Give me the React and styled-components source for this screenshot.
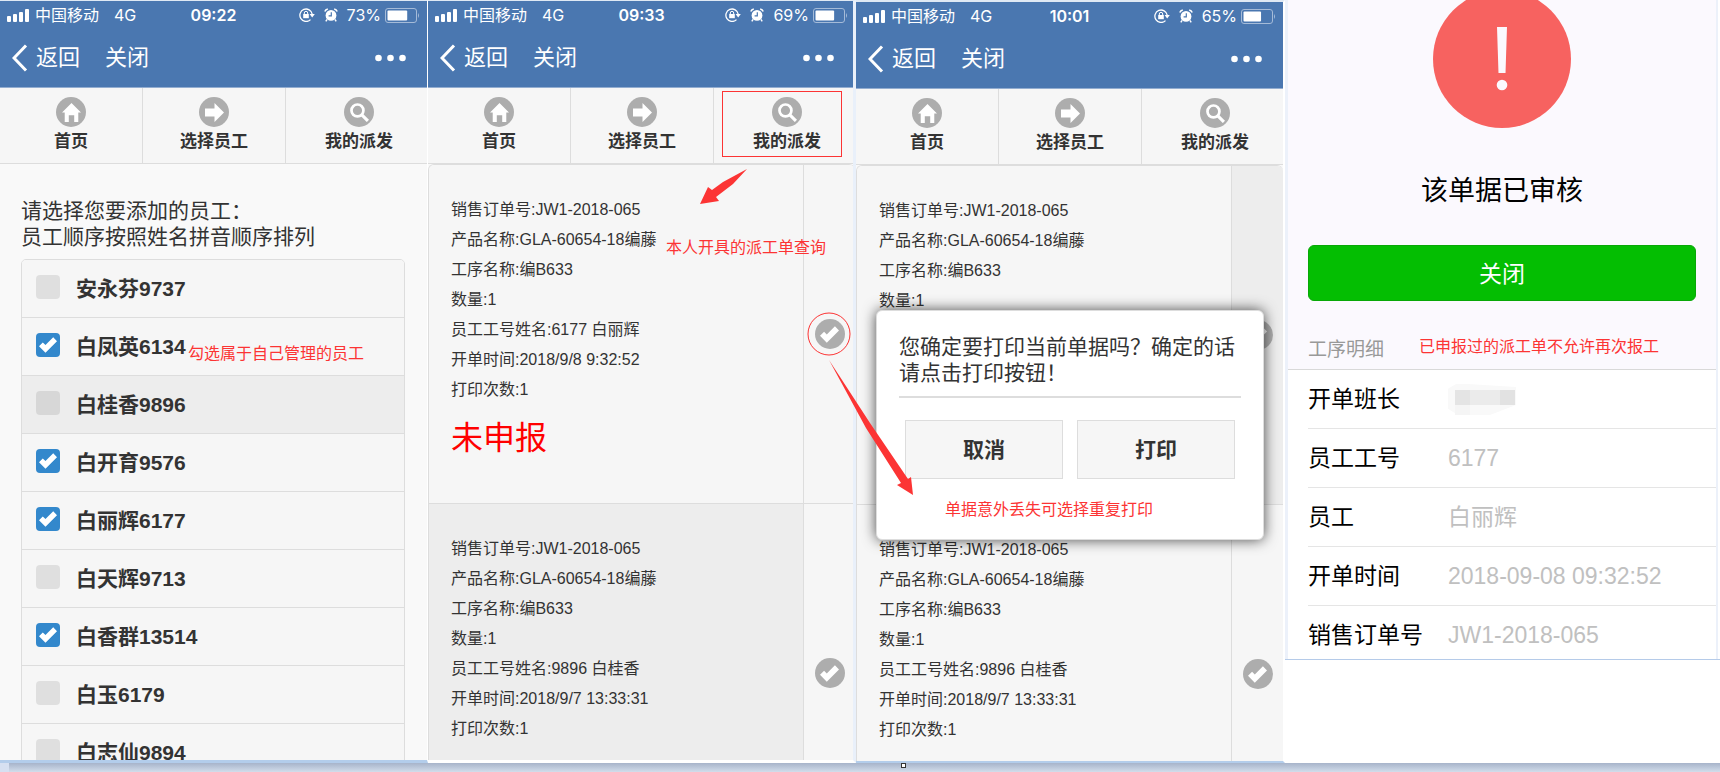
import React, { useState } from "react";
import styled, { createGlobalStyle } from "styled-components";

const GlobalStyle = createGlobalStyle`
  *, *::before, *::after {
    box-sizing: border-box;
  }

  body {
    margin: 0;
    background: #fff;
    color: #333;
    font-family: "Liberation Sans", "Noto Sans CJK SC", sans-serif;
    font-size: 16px;
  }

  h1, h2, p, ul, dl, dd {
    margin: 0;
    padding: 0;
    font-weight: 400;
  }

  a {
    color: inherit;
    text-decoration: none;
  }

  button {
    font-family: inherit;
    cursor: pointer;
  }
`;

const Page = styled.div`
  display: flex;
  flex-direction: column;
  height: 100vh;
  overflow: hidden;
`;

const Board = styled.main`
  flex: 1;
  min-height: 0;
  display: grid;
  grid-template-columns: 428fr 428fr 429fr 435fr;
`;

const Column = styled.section`
  position: relative;
  min-width: 0;
  min-height: 0;
  display: flex;
  flex-direction: column;
`;

const Phone = styled.div`
  flex: 1;
  min-height: 0;
  overflow: hidden;
  background: #f9f9f9;
  border-style: solid;
  border-color: #dfe9f4 ${({ $edge }) => $edge} ${({ $base }) => $base} #fff;
  border-width: ${({ $top }) => $top}px ${({ $side }) => $side}px
    ${({ $bottom }) => $bottom}px 0;
`;

const Screen = styled.div`
  margin-right: ${({ $crop }) => ($crop ? "-2px" : "0")};
`;

const Header = styled.header`
  height: 87px;
  background: #4a77b0;
  border-bottom: 1px solid #93add0;
  color: #fff;
`;

const StatusBar = styled.div`
  display: grid;
  grid-template-columns: 1fr auto 1fr;
  align-items: center;
  height: 28px;
  padding: 0 7px;
  font-family: Inter, "Noto Sans CJK SC", sans-serif;
  font-size: 16px;
  line-height: 20px;
`;

const StatusLeft = styled.div`
  display: flex;
  align-items: center;
  gap: 5px;
`;

const Network = styled.span`
  margin-left: 10px;
`;

const Clock = styled.time`
  font-weight: 600;
`;

const StatusRight = styled.div`
  display: flex;
  align-items: center;
  justify-content: flex-end;
  gap: 9px;
`;

const BatteryGroup = styled.span`
  display: flex;
  align-items: center;
  gap: 4px;
`;

const NavBar = styled.nav`
  display: flex;
  align-items: center;
  height: 57px;
  padding: 0 21px 0 12px;
  font-size: 22px;
  line-height: 30px;
`;

const BackLink = styled.a`
  display: flex;
  align-items: center;
  gap: 8px;
  margin-right: 25px;
`;

const MoreButton = styled.button`
  display: flex;
  margin-left: auto;
  padding: 0;
  border: 0;
  background: none;
`;

// the last tab runs a little past the screen edge
const Tabs = styled.nav`
  display: grid;
  grid-template-columns: 142fr 143fr 147fr;
  height: 76px;
  margin-right: -5px;
  background: #f6f6f6;
  border-bottom: 1px solid #ddd;
`;

const Tab = styled.a`
  display: flex;
  flex-direction: column;
  align-items: center;
  gap: 5px;
  padding-top: 9px;
  font-size: 17px;
  line-height: 20px;
  font-weight: 700;

  & + & {
    border-left: 1px solid #ddd;
  }
`;

const RoundIcon = styled.span`
  display: flex;
  align-items: center;
  justify-content: center;
  width: 30px;
  height: 30px;
  border-radius: 50%;
  background: #adadad;
`;

const EmployeeForm = styled.form`
  padding: 34px 22px 0 21px;
`;

const FormTitle = styled.p`
  margin-bottom: 9px;
  font-size: 21px;
  line-height: 26px;
`;

const EmployeeList = styled.ul`
  list-style: none;
  border: 1px solid #ddd;
  border-radius: 5px 5px 0 0;
  overflow: hidden;
`;

const EmployeeItem = styled.li`
  background: ${({ $active }) => ($active ? "#ededed" : "#f6f6f6")};

  & + & {
    border-top: 1px solid #ddd;
  }
`;

const EmployeeLabel = styled.label`
  display: flex;
  align-items: center;
  gap: 16px;
  height: 57px;
  padding: 0 0 3px 14px;
  font-size: 21px;
  font-weight: 700;
`;

const Checkbox = styled.input`
  appearance: none;
  display: flex;
  align-items: center;
  justify-content: center;
  width: 24px;
  height: 24px;
  margin: 0;
  border-radius: 4px;
  background: rgba(0, 0, 0, 0.09);

  &:checked {
    background: #38c;
  }

  &:checked::after {
    content: "";
    width: 18px;
    height: 18px;
    background: #fff;
    clip-path: polygon(
      100% 29%,
      79% 7%,
      36% 50%,
      21% 36%,
      0 57%,
      36% 93%
    );
  }
`;

const OrderList = styled.ul`
  list-style: none;
  border: 1px solid #ddd;
  border-bottom: 0;
  border-right: 0;
  border-radius: 6px 6px 0 0;
  overflow: hidden;
`;

const OrderItem = styled.li`
  display: flex;
  min-height: 339px;
  border-bottom: 1px solid #ddd;
  background: #f6f6f6;
`;

const OrderBody = styled.div`
  flex: 1;
  padding: 30px 22px 0;
  background: ${({ $active }) => ($active ? "#ededed" : "transparent")};
  font-size: 16px;
  line-height: 30px;
`;

const OrderStatus = styled.p`
  margin-top: 10px;
  color: #f00;
  font-size: 32px;
  line-height: 46px;
`;

const PrintButton = styled.button`
  display: flex;
  align-items: center;
  justify-content: center;
  width: 52px;
  padding: 0;
  border: 0;
  border-left: 1px solid #ddd;
  background: ${({ $active }) => ($active ? "#ededed" : "transparent")};
`;

const Note = styled.p`
  color: #fc3434;
  font-size: 16px;
  line-height: 22px;
  white-space: nowrap;
`;

const FloatingNote = styled(Note)`
  position: absolute;
  left: ${({ $left }) => $left}px;
  top: ${({ $top }) => $top}px;
`;

const Highlight = styled.span`
  position: absolute;
  left: 294px;
  top: 91px;
  width: 120px;
  height: 66px;
  border: 1px solid #fc3434;
  pointer-events: none;
`;

const Arrows = styled.svg`
  position: absolute;
  z-index: 3;
  left: 0;
  top: 0;
  overflow: visible;
  pointer-events: none;
`;

const Dialog = styled.div`
  position: absolute;
  left: 20px;
  right: 21px;
  top: 310px;
  height: 230px;
  padding: 23px 22px;
  border: 1px solid #ddd;
  border-radius: 6px;
  background: #fff;
  box-shadow: 0 0 14px rgba(0, 0, 0, 0.7);
`;

const DialogText = styled.p`
  padding-bottom: 10px;
  border-bottom: 2px solid #ddd;
  font-size: 21px;
  line-height: 26px;
`;

const DialogActions = styled.div`
  display: grid;
  grid-template-columns: 1fr 1fr;
  gap: 14px;
  padding: 22px 6px 20px;
`;

const DialogButton = styled.button`
  height: 59px;
  padding-bottom: 4px;
  border: 1px solid #ddd;
  background: #f6f6f6;
  color: #333;
  font-size: 21px;
  font-weight: 700;
`;

const DialogNote = styled(Note)`
  padding-left: 46px;
`;

const Result = styled.div`
  display: flex;
  flex-direction: column;
  margin-right: 2px;
  border: solid #ecf1fa;
  border-width: 0 2px 0 3px;
  background: #fbf9fe;
  overflow: hidden;
`;

const ResultFrame = styled.div`
  border-bottom: 1px solid #b5cbe9;
`;

const WarnIcon = styled.svg`
  align-self: center;
  margin-top: -10px;
`;

const ResultTitle = styled.h1`
  margin-top: 43px;
  color: #000;
  font-size: 27px;
  line-height: 40px;
  text-align: center;
`;

const CloseButton = styled.button`
  height: 56px;
  margin: 34px 20px 0;
  padding-bottom: 4px;
  border: 1px solid #08a807;
  border-radius: 6px;
  background: #04be02;
  color: #fff;
  font-size: 23px;
`;

const DetailHeading = styled.div`
  display: flex;
  align-items: flex-start;
  gap: 35px;
  height: 69px;
  padding: 35px 20px 0;
  border-bottom: 1px solid #d9d9d9;
`;

const DetailTitle = styled.h2`
  color: #999;
  font-size: 19px;
  line-height: 28px;
`;

const DetailList = styled.dl`
  padding-left: 20px;
  background: #fff;
`;

const DetailRow = styled.div`
  display: flex;
  align-items: center;
  height: 59px;
  border-bottom: 1px solid #e5e5e5;
  font-size: 23px;
  line-height: 34px;

  &:last-child {
    height: 53px;
    padding-top: 4px;
    border-bottom: 0;
  }
`;

const DetailLabel = styled.dt`
  width: 140px;
  color: #000;
`;

const DetailValue = styled.dd`
  display: flex;
  color: #c0c0c0;
`;

const Footer = styled.footer`
  display: flex;
  justify-content: center;
  height: 9px;
  border-left: 9px solid #d6e0f1;
  background: linear-gradient(#a7b4ca, #d2ddeb);
`;

const Handle = styled.span`
  width: 5px;
  height: 5px;
  margin-left: 78px;
  border: 1px solid #333;
  background: #fff;
`;

const employees = [
  { name: "安永芬9737" },
  { name: "白凤英6134", checked: true },
  { name: "白桂香9896", active: true },
  { name: "白开育9576", checked: true },
  { name: "白丽辉6177", checked: true },
  { name: "白天辉9713" },
  { name: "白香群13514", checked: true },
  { name: "白玉6179" },
  { name: "白志仙9894" },
];

const orders = [
  {
    id: 1,
    lines: [
      "销售订单号:JW1-2018-065",
      "产品名称:GLA-60654-18编藤",
      "工序名称:编B633",
      "数量:1",
      "员工工号姓名:6177 白丽辉",
      "开单时间:2018/9/8 9:32:52",
      "打印次数:1",
    ],
    status: "未申报",
  },
  {
    id: 2,
    lines: [
      "销售订单号:JW1-2018-065",
      "产品名称:GLA-60654-18编藤",
      "工序名称:编B633",
      "数量:1",
      "员工工号姓名:9896 白桂香",
      "开单时间:2018/9/7 13:33:31",
      "打印次数:1",
    ],
  },
];

// the order behind the dialog only shows its first lines
const coveredOrders = [
  { id: 1, lines: orders[0].lines.slice(0, 4) },
  orders[1],
];

const details = [
  { label: "开单班长", value: null },
  { label: "员工工号", value: "6177" },
  { label: "员工", value: "白丽辉" },
  { label: "开单时间", value: "2018-09-08 09:32:52" },
  { label: "销售订单号", value: "JW1-2018-065" },
];

const HomeIcon = () => (
  <svg width="19" height="19" viewBox="0 0 14 14" fill="#fff">
    <polygon points="7,0 0,7 2,7 2,14 5,14 5,9 9,9 9,14 12,14 12,7 14,7" />
  </svg>
);

const ArrowIcon = () => (
  <svg width="19" height="19" viewBox="0 0 14 14" fill="#fff">
    <polygon points="7,0 7,4 0,4 0,10 7,10 7,14 14,7" />
  </svg>
);

const SearchIcon = () => (
  <svg width="19" height="19" viewBox="0 0 14 14" fill="none" stroke="#fff">
    <circle cx="5.5" cy="5.5" r="4.4" strokeWidth="2" />
    <path d="M8.7 8.7 L13.2 13.2" strokeWidth="2.3" />
  </svg>
);

const CheckIcon = () => (
  <svg width="19" height="19" viewBox="0 0 14 14" fill="#fff">
    <polygon points="14,4 11,1 5,7 3,5 0,8 5,13" />
  </svg>
);

const SignalIcon = () => (
  <svg width="23" height="14" viewBox="0 0 23 14" fill="#fff">
    <rect x="0" y="8" width="4" height="6" rx="1" />
    <rect x="6" y="6" width="4" height="8" rx="1" />
    <rect x="12" y="4" width="4" height="10" rx="1" />
    <rect x="18" y="1" width="4" height="13" rx="1" />
  </svg>
);

const LockIcon = () => (
  <svg width="16" height="14" viewBox="0 0 16 14" fill="none" stroke="#fff">
    <path d="M11.5 11.6 A6.2 6.2 0 1 1 13.2 6.2" strokeWidth="1.3" />
    <path d="M10.6 6 H15.8 L13.2 9.4 Z" fill="#fff" stroke="none" />
    <rect x="4.2" y="6" width="5.6" height="4.2" fill="#fff" stroke="none" />
    <path d="M5.3 6.2 V5 A1.7 1.7 0 0 1 8.7 5 V6.2" />
  </svg>
);

const AlarmIcon = () => (
  <svg width="14" height="14" viewBox="0 0 14 14" fill="none" stroke="#fff">
    <circle cx="7" cy="7.4" r="5.4" fill="#fff" stroke="none" />
    <path d="M0.8 3.6 A4 4 0 0 1 3.8 1 M13.2 3.6 A4 4 0 0 0 10.2 1" strokeWidth="1.5" />
    <path d="M3 11.5 L1.8 13.3 M11 11.5 L12.2 13.3" strokeWidth="1.4" />
    <path d="M7.3 4.2 V7.8 H4.6" stroke="#4a77b0" strokeWidth="1.2" />
  </svg>
);

const BatteryIcon = ({ level }) => (
  <svg width="35" height="15" viewBox="0 0 35 15">
    <rect x="0.5" y="0.5" width="31" height="14" rx="2.5" fill="none" stroke="#a5bbd8" />
    <rect x="2.5" y="2.5" width={(27 * level) / 100} height="10" rx="1" fill="#fff" />
    <path d="M33 5 Q35 7.5 33 10 Z" fill="#a5bbd8" />
  </svg>
);

const BackIcon = () => (
  <svg width="16" height="28" viewBox="0 0 16 28" fill="none" stroke="#fff" strokeWidth="3">
    <path d="M14 1.5 L2 14 L14 26.5" />
  </svg>
);

const MoreIcon = () => (
  <svg width="31" height="8" viewBox="0 0 31 8" fill="#fff">
    <circle cx="3.5" cy="4" r="3.3" />
    <circle cx="15.5" cy="4" r="3.3" />
    <circle cx="27.5" cy="4" r="3.3" />
  </svg>
);

// blurred-out foreman name
const HiddenName = () => (
  <svg width="72" height="34" viewBox="0 0 72 34">
    <path d="M-2 8 L8 2 H20 L68 5 V23 L42 33 H10 L-1 26 Z" fill="#f9f9f9" />
    <rect x="7" y="8" width="15" height="15" fill="#e4e4e4" />
    <rect x="22" y="8" width="30" height="15" fill="#ebebeb" />
    <rect x="52" y="8" width="15" height="15" fill="#e2e2e2" />
    <rect x="7" y="23" width="15" height="10" fill="#f5f5f5" />
  </svg>
);

function PhoneHeader({ time, battery }) {
  return (
    <Header>
      <StatusBar>
        <StatusLeft>
          <SignalIcon />
          <span>中国移动</span>
          <Network>4G</Network>
        </StatusLeft>
        <Clock>{time}</Clock>
        <StatusRight>
          <LockIcon />
          <AlarmIcon />
          <BatteryGroup>
            {battery}%
            <BatteryIcon level={battery} />
          </BatteryGroup>
        </StatusRight>
      </StatusBar>
      <NavBar>
        <BackLink href="#back">
          <BackIcon />
          返回
        </BackLink>
        <a href="#close">关闭</a>
        <MoreButton type="button" aria-label="更多">
          <MoreIcon />
        </MoreButton>
      </NavBar>
    </Header>
  );
}

function TabBar() {
  return (
    <Tabs>
      <Tab href="#home">
        <RoundIcon>
          <HomeIcon />
        </RoundIcon>
        首页
      </Tab>
      <Tab href="#employees">
        <RoundIcon>
          <ArrowIcon />
        </RoundIcon>
        选择员工
      </Tab>
      <Tab href="#mine">
        <RoundIcon>
          <SearchIcon />
        </RoundIcon>
        我的派发
      </Tab>
    </Tabs>
  );
}

function Orders({ items, activeBody, activePrint }) {
  return (
    <OrderList>
      {items.map(({ id, lines, status }) => (
        <OrderItem key={id}>
          <OrderBody $active={activeBody === id}>
            {lines.map((line) => (
              <p key={line}>{line}</p>
            ))}
            {status && <OrderStatus>{status}</OrderStatus>}
          </OrderBody>
          <PrintButton type="button" aria-label="打印" $active={activePrint === id}>
            <RoundIcon>
              <CheckIcon />
            </RoundIcon>
          </PrintButton>
        </OrderItem>
      ))}
    </OrderList>
  );
}

function EmployeePicker() {
  const [selected, setSelected] = useState(
    employees.filter((item) => item.checked).map((item) => item.name)
  );

  const handleToggle = (name) => {
    setSelected((prev) =>
      prev.includes(name) ? prev.filter((n) => n !== name) : [...prev, name]
    );
  };

  return (
    <EmployeeForm>
      <FormTitle>
        请选择您要添加的员工：
        <br />
        员工顺序按照姓名拼音顺序排列
      </FormTitle>
      <EmployeeList>
        {employees.map(({ name, active }) => (
          <EmployeeItem key={name} $active={active}>
            <EmployeeLabel>
              <Checkbox
                type="checkbox"
                checked={selected.includes(name)}
                onChange={() => handleToggle(name)}
              />
              {name}
            </EmployeeLabel>
          </EmployeeItem>
        ))}
      </EmployeeList>
    </EmployeeForm>
  );
}

export default function App() {
  return (
    <Page>
      <GlobalStyle />
      <Board>
        <Column>
          <Phone $top={1} $side={1} $bottom={3} $edge="#fff" $base="#b3cdeb">
            <PhoneHeader time="09:22" battery={73} />
            <TabBar />
            <EmployeePicker />
          </Phone>
          <FloatingNote $left={188} $top={343}>
            勾选属于自己管理的员工
          </FloatingNote>
        </Column>

        <Column>
          <Phone $top={1} $side={3} $bottom={3} $edge="#e9f0fa" $base="#fff">
            <Screen $crop>
              <PhoneHeader time="09:33" battery={69} />
              <TabBar />
              <Orders items={orders} activeBody={2} />
            </Screen>
          </Phone>
          <Highlight />
          <FloatingNote $left={238} $top={237}>
            本人开具的派工单查询
          </FloatingNote>
          <Arrows width="428" height="500" fill="#fc3434">
            <polygon points="319,169 295,182 284,190 280,187 272,204 291,201 288,197 305,184" />
            <circle cx="401" cy="334" r="21" fill="none" stroke="#fc3434" />
            <polygon points="401,360 438,428 473,483 469,485 485,495 483,477 480,479 442,423" />
          </Arrows>
        </Column>

        <Column>
          <Phone $top={2} $side={2} $bottom={2} $edge="#fff" $base="#b3cdeb">
            <PhoneHeader time="10:01" battery={65} />
            <TabBar />
            <Orders items={coveredOrders} activePrint={1} />
          </Phone>
          <Dialog role="dialog">
            <DialogText>
              您确定要打印当前单据吗？确定的话请点击打印按钮！
            </DialogText>
            <DialogActions>
              <DialogButton type="button">取消</DialogButton>
              <DialogButton type="button">打印</DialogButton>
            </DialogActions>
            <DialogNote>单据意外丢失可选择重复打印</DialogNote>
          </Dialog>
        </Column>

        <Column>
          <ResultFrame>
            <Result>
              <WarnIcon width="138" height="138" viewBox="0 0 138 138">
                <circle cx="69" cy="69" r="69" fill="#f76260" />
                <path d="M64 37 H74 L72.500 83 H65.500 Z" fill="#fbf9fe" />
                <circle cx="69" cy="95" r="5.300" fill="#fbf9fe" />
              </WarnIcon>
              <ResultTitle>该单据已审核</ResultTitle>
              <CloseButton type="button">关闭</CloseButton>
              <DetailHeading>
                <DetailTitle>工序明细</DetailTitle>
                <Note>已申报过的派工单不允许再次报工</Note>
              </DetailHeading>
              <DetailList>
                {details.map(({ label, value }) => (
                  <DetailRow key={label}>
                    <DetailLabel>{label}</DetailLabel>
                    <DetailValue>{value || <HiddenName />}</DetailValue>
                  </DetailRow>
                ))}
              </DetailList>
            </Result>
          </ResultFrame>
        </Column>
      </Board>
      <Footer>
        <Handle />
      </Footer>
    </Page>
  );
}
